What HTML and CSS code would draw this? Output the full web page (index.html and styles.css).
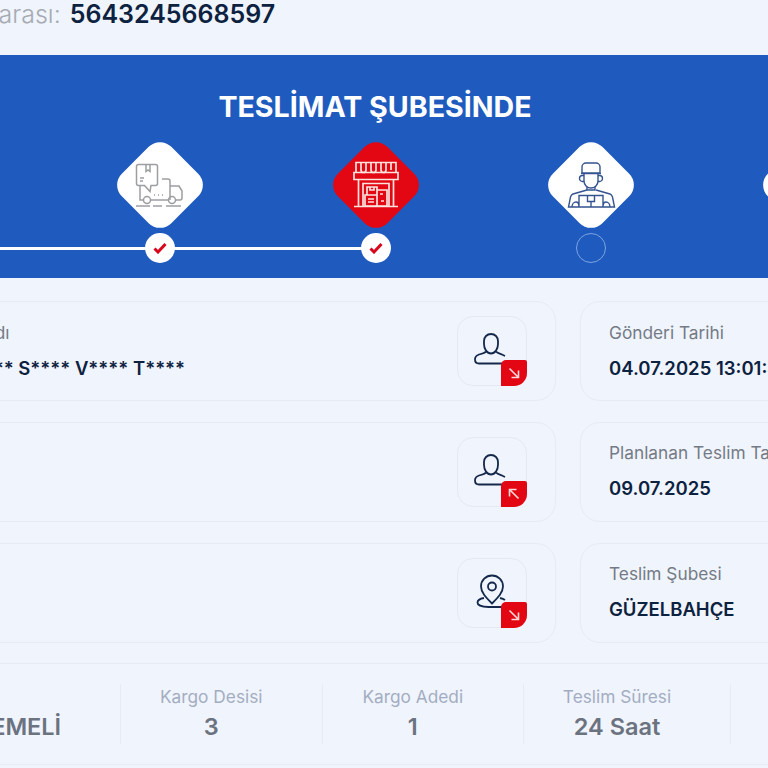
FILE: index.html
```html
<!doctype html>
<html lang="tr">
<head>
<meta charset="utf-8">
<title>Gönderi Takip</title>
<link rel="stylesheet" href="styles.css">
</head>
<body>
<div class="page">

	<div class="track-no"><span class="track-label">Takip Numarası:</span> <b>5643245668597</b></div>

	<section class="banner">
		<h1>TESLİMAT ŞUBESİNDE</h1>
		<div class="steps">
			<div class="step done">
				<div class="diamond"></div>
				<div class="dot"><svg width="14" height="12" viewBox="0 0 14 12"><path d="M1.500 6.500 5 10l7.500-8" fill="none" stroke="#d9071c" stroke-width="3"/></svg></div>
			</div>
			<div class="step done">
				<div class="diamond">
					<svg class="step-icon" width="60" height="60" viewBox="0 0 60 60" fill="none" stroke="#9c9ea2" stroke-width="1.500">
						<path d="M8.500 9.500h17a2 2 0 0 1 2 2v17a2 2 0 0 1-2 2h-4.500l-1 6-5.500-6h-6a2 2 0 0 1-2-2v-17a2 2 0 0 1 2-2z"/>
						<path d="M16 9.500v7l2-1.500 2 1.500v-7M10 23h4M10 26h3"/>
						<path d="M10 30v15h3.500M21 45h17M46 45h4a2 2 0 0 0 2-2v-7l-3-5h-9v14M32 24h6a2 2 0 0 1 2 2v5"/>
						<circle cx="17" cy="45" r="3.500"/><circle cx="42" cy="45" r="3.500"/>
						<path d="M24 40h1M28 40h1M32 40h1M6 51h14M23 51h9M36 51h15"/>
					</svg>
				</div>
				<div class="dot"><svg width="14" height="12" viewBox="0 0 14 12"><path d="M1.500 6.500 5 10l7.500-8" fill="none" stroke="#d9071c" stroke-width="3"/></svg></div>
			</div>
			<div class="step done current">
				<div class="diamond">
					<svg class="step-icon" width="60" height="60" viewBox="0 0 60 60" fill="none" stroke="#fbe3dd" stroke-width="1.700">
						<path d="M10 7.500h40v10H10zM8 17.500h44v7H8zM12.500 24.500v27M47.500 24.500v27M8 51.500h44"/>
						<path d="M15 8v7a2.500 2.500 0 0 0 5 0V8M25 8v7a2.500 2.500 0 0 0 5 0V8M35 8v7a2.500 2.500 0 0 0 5 0V8M45 8v7"/>
						<path d="M17 51V28.500h26V51"/>
						<path d="M21 32h10v8H21zM24 32v3h4v-3M19 40h12v11H19zM22 44h6M22 47h6M31 35h10v16H31zM34 39h3M35 46h3"/>
					</svg>
				</div>
				<div class="dot"><svg width="14" height="12" viewBox="0 0 14 12"><path d="M1.500 6.500 5 10l7.500-8" fill="none" stroke="#d9071c" stroke-width="3"/></svg></div>
			</div>
			<div class="step">
				<div class="diamond">
					<svg class="step-icon" width="60" height="60" viewBox="0 0 60 60" fill="none" stroke="#35538f" stroke-width="1.400">
						<path d="M21 18v-6a4 4 0 0 1 4-4h10a4 4 0 0 1 4 4v6zM20 18.500h20"/>
						<path d="M23 19v7a7 7 0 0 0 14 0v-7M23 20.500h-1.500a2.500 2.500 0 0 0 0 6H23M37 20.500h1.500a2.500 2.500 0 0 1 0 6H37"/>
						<path d="M26 32v3h8v-3"/>
						<path d="M26 35l-14 4c-1.500.5-2 1.500-2.500 3l-2 10h46l-2-10c-.5-1.500-1-2.500-2.500-3l-14-4"/>
						<path d="M18 52V40.500h24V52M26.500 40.500v6h7v-6M30 46.500V52M11 52c0-3 2-5 4-5s3 2 3 5M42 52c0-3 1-5 3-5s4 2 4 5"/>
					</svg>
				</div>
				<div class="dot"></div>
			</div>
			<div class="step">
				<div class="diamond"></div>
				<div class="dot"></div>
			</div>
		</div>
	</section>

	<section class="info">
		<div class="card">
			<div class="card-text">
				<div class="card-label">Firma Adı</div>
				<div class="card-value">M**** ** S**** V**** T****</div>
			</div>
			<div class="icon-box">
				<svg width="70" height="70" viewBox="0 0 70 70" fill="none" stroke="#14284b" stroke-width="1.800">
					<path d="M33 17c-4 0-7 3-7 7v3c0 5 3 9.500 7 9.500s7-4.500 7-9.500v-3c0-4-3-7-7-7z"/>
					<path d="M28 34.500c-1 1.500-3 2-7 3-3 1-4 3-4 5 0 2.500 1.500 4 4 4h23M38 34.500c1 1.500 3 2 6 3l3 1.500"/>
				</svg>
				<div class="badge"><svg width="12" height="12" viewBox="0 0 12 12" fill="none" stroke="#ffd9d9" stroke-width="1.600"><path d="M1.500 1.500l9 9M10.500 3.500v7h-7"/></svg></div>
			</div>
		</div>
		<div class="card right">
			<div class="card-text">
				<div class="card-label">Gönderi Tarihi</div>
				<div class="card-value">04.07.2025 13:01:45</div>
			</div>
		</div>
		<div class="card">
			<div class="card-text">
				<div class="card-label">Alıcı</div>
				<div class="card-value">A****</div>
			</div>
			<div class="icon-box">
				<svg width="70" height="70" viewBox="0 0 70 70" fill="none" stroke="#14284b" stroke-width="1.800">
					<path d="M33 17c-4 0-7 3-7 7v3c0 5 3 9.500 7 9.500s7-4.500 7-9.500v-3c0-4-3-7-7-7z"/>
					<path d="M28 34.500c-1 1.500-3 2-7 3-3 1-4 3-4 5 0 2.500 1.500 4 4 4h23M38 34.500c1 1.500 3 2 6 3l3 1.500"/>
				</svg>
				<div class="badge"><svg width="12" height="12" viewBox="0 0 12 12" fill="none" stroke="#ffd9d9" stroke-width="1.600"><path d="M10.500 10.500l-9-9M8.500 1.500h-7v7"/></svg></div>
			</div>
		</div>
		<div class="card right">
			<div class="card-text">
				<div class="card-label">Planlanan Teslim Tarihi</div>
				<div class="card-value">09.07.2025</div>
			</div>
		</div>
		<div class="card">
			<div class="card-text">
				<div class="card-label">Çıkış</div>
				<div class="card-value">İZMİR</div>
			</div>
			<div class="icon-box">
				<svg width="70" height="70" viewBox="0 0 70 70" fill="none" stroke="#14284b" stroke-width="1.800">
					<path d="M34 44.500c-6-6-11-11-11-17a11 11 0 0 1 22 0c0 6-5 11-11 17z"/>
					<circle cx="34" cy="27.500" r="4"/>
					<path d="M26 39c-4 .7-6.500 2.500-6.500 4.500 0 2.500 4 4.500 11 4.500h13M42 39c2 .4 4 1.200 5 2"/>
				</svg>
				<div class="badge"><svg width="12" height="12" viewBox="0 0 12 12" fill="none" stroke="#ffd9d9" stroke-width="1.600"><path d="M1.500 1.500l9 9M10.500 3.500v7h-7"/></svg></div>
			</div>
		</div>
		<div class="card right">
			<div class="card-text">
				<div class="card-label">Teslim Şubesi</div>
				<div class="card-value">GÜZELBAHÇE</div>
			</div>
		</div>
	</section>

	<section class="stats">
		<div class="stat first">
			<div class="stat-label">Ödeme</div>
			<div class="stat-value">GÖNDERİCİ ÖDEMELİ</div>
		</div>
		<div class="stat">
			<div class="stat-label">Kargo Desisi</div>
			<div class="stat-value">3</div>
		</div>
		<div class="stat">
			<div class="stat-label">Kargo Adedi</div>
			<div class="stat-value">1</div>
		</div>
		<div class="stat wide">
			<div class="stat-label">Teslim Süresi</div>
			<div class="stat-value">24 Saat</div>
		</div>
		<div class="stat"></div>
	</section>

</div>
</body>
</html>
```

FILE: styles.css
```css
html, body
{
	margin: 0;
	height: 768px;
	overflow: hidden;
	background-color: #f0f4fc;
	font-family: "Inter", "Liberation Sans", sans-serif;
}

/* the page is wider than the window and starts left of it */
.page
{
	width: 1500px;
	margin-left: -375px;
}

.track-no
{
	height: 55px;
	padding-left: 249px;
	box-sizing: border-box;
	font-size: 25px;
	line-height: 29px;
	color: #0d2240;
}

.track-label
{
	color: #a6abb3;
	font-weight: 300;
}

.track-no b
{
	font-weight: 600;
	margin-left: 2px;
}

.banner
{
	height: 223px;
	background-color: #1f5bbf;
	color: #ffffff;
	overflow: hidden;
}

.banner h1
{
	margin: 0;
	padding-top: 34px;
	height: 87px;
	box-sizing: border-box;
	text-align: center;
	font-size: 28.600px;
	line-height: 36px;
	font-weight: 700;
}

.steps
{
	display: flex;
	justify-content: center;
	padding-left: 1px;
}

.step
{
	position: relative;
	width: 215.200px;
	flex-shrink: 0;
	display: flex;
	flex-direction: column;
	align-items: center;
}

.step.done:not(:first-child)::before
{
	content: "";
	position: absolute;
	left: -107px;
	width: 215px;
	top: 104.500px;
	height: 3px;
	background-color: #ffffff;
}

.diamond
{
	position: relative;
	width: 86px;
	height: 86px;
	display: flex;
	align-items: center;
	justify-content: center;
}

.diamond::before
{
	content: "";
	position: absolute;
	left: 8px;
	top: 8px;
	width: 70px;
	height: 70px;
	border-radius: 16px;
	background-color: #ffffff;
	transform: rotate(45deg);
}

.current .diamond::before
{
	background-color: #e30613;
}

.step-icon
{
	position: relative;
}

.dot
{
	position: relative;
	z-index: 1;
	box-sizing: border-box;
	width: 30px;
	height: 30px;
	margin-top: 5px;
	border-radius: 50%;
	border: 1px solid #7ea3e0;
	display: flex;
	align-items: center;
	justify-content: center;
}

.done .dot
{
	background-color: #ffffff;
	border: none;
}

.info
{
	display: grid;
	grid-template-columns: 653px 620px;
	justify-content: start;
	column-gap: 24px;
	row-gap: 20.800px;
	padding-top: 23px;
	padding-left: 278px;
}

.card
{
	box-sizing: border-box;
	height: 100px;
	border: 1px solid #e6ebf5;
	border-radius: 20px;
	padding: 0 28px;
	display: flex;
	align-items: center;
	justify-content: space-between;
}

.card-label
{
	font-size: 17.300px;
	line-height: 20px;
	color: #747b86;
	white-space: nowrap;
}

.card-value
{
	margin-top: 13px;
	font-size: 18.500px;
	line-height: 24px;
	font-weight: 600;
	color: #0d2240;
	white-space: nowrap;
}

.icon-box
{
	position: relative;
	box-sizing: border-box;
	width: 70px;
	height: 70px;
	border: 1px solid #e4e9f3;
	border-radius: 16px;
}

.icon-box svg
{
	display: block;
}

.badge
{
	position: absolute;
	right: -1px;
	bottom: -1px;
	width: 26px;
	height: 26px;
	background-color: #e30613;
	border-radius: 5px 2px 13px 0;
	display: flex;
	align-items: center;
	justify-content: center;
}

.stats
{
	box-sizing: border-box;
	height: 102px;
	margin-top: 20.400px;
	border-top: 1px solid #e6ebf5;
	border-bottom: 1px solid #e6ebf5;
	padding: 20px 0 20px 168px;
	display: flex;
}

.stat
{
	box-sizing: border-box;
	width: 201.500px;
	height: 60px;
	padding-right: 20px;
	border-right: 1px solid #e6ebf5;
	text-align: center;
}

.stat.first
{
	width: 328px;
	padding-right: 32px;
}

.stat.wide
{
	width: 207px;
}

.stat-label
{
	font-size: 17.300px;
	line-height: 26px;
	color: #a3adc2;
}

.stat-value
{
	margin-top: 2px;
	font-size: 23.500px;
	line-height: 30px;
	font-weight: 600;
	color: #6b7280;
	white-space: nowrap;
}
```
